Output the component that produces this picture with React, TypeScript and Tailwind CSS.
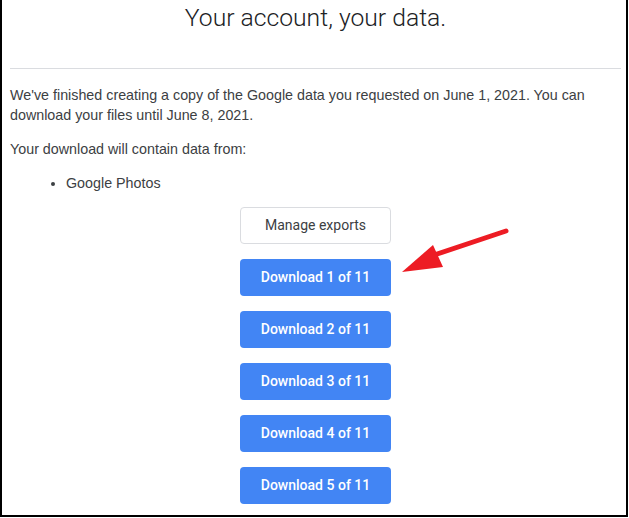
import React from 'react';

const downloads = [1, 2, 3, 4, 5];

export default function App() {
  return (
    <div className="relative w-[629px] h-[518px] bg-white overflow-hidden">
      <div className="w-[628px] h-[517px] border-l-2 border-r-2 border-b-2 border-black pl-2 pr-[5px] font-['Liberation_Sans',Arial,sans-serif] text-[14.3px] text-[#3c4043]">
        <h1 className="pt-[2px] text-center text-[24.7px] leading-[32px] font-light text-[#202124] font-['Roboto',sans-serif]">
          Your account, your data.
        </h1>
        <div className="mt-[34px] h-px bg-[#dadce0]" />

        <p className="mt-4 leading-[20px]">
          We've finished creating a copy of the Google data you requested on June 1, 2021. You can
          download your files until June 8, 2021.
        </p>
        <p className="mt-[14px] leading-[20px]">Your download will contain data from:</p>
        <ul className="mt-[14px] list-disc pl-[56px] leading-[20px]">
          <li>Google Photos</li>
        </ul>

        {/* Buttons */}
        <div className="mt-[14px] flex flex-col items-center gap-[15px] font-['Roboto',sans-serif] text-[14px]">
          <button className="h-[37px] px-6 rounded border border-[#dadce0] bg-white text-[#3c4043]">
            Manage exports
          </button>
          {downloads.map((n) => (
            <button
              key={n}
              className="h-[37px] px-[21px] rounded bg-[#4285f4] text-white font-medium"
            >
              Download {n} of 11
            </button>
          ))}
        </div>
      </div>

      {/* Red arrow annotation */}
      <svg className="absolute left-0 top-0 pointer-events-none" width="629" height="518">
        <line x1="506" y1="231" x2="425" y2="258" stroke="#ed1c24" strokeWidth="5" strokeLinecap="round" />
        <polygon points="402,272 433,245 443,267" fill="#ed1c24" />
      </svg>
    </div>
  );
}
